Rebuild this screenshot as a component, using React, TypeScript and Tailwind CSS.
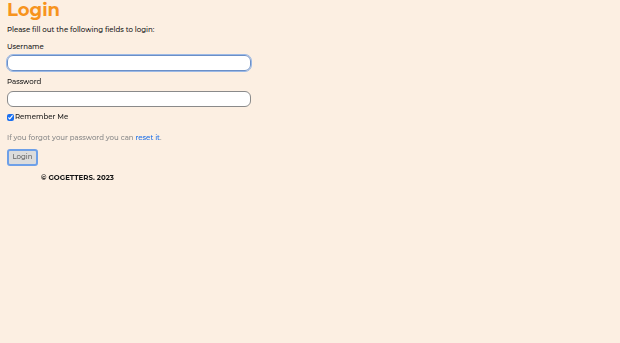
export default function App() {
  return (
    <div className="min-h-[343px] w-full bg-[#fcefe2] font-['Montserrat','Noto_Sans',sans-serif] text-[#161616]">
      <div className="px-[7px]">
        <h1 className="text-[18px] font-bold leading-[20px] text-[#f7941d]">Login</h1>
        <p className="mt-[5px] text-[7px] font-medium leading-[10px]">Please fill out the following fields to login:</p>
        <form className="w-[244px]" onSubmit={(e) => e.preventDefault()}>
          <label className="mt-[7px] block text-[7px] font-medium leading-[10px]">Username</label>
          <input
            autoFocus
            className="mt-[3px] block h-[16px] w-full rounded-[6px] border border-[#6b8fc7] bg-white px-[4px] text-[7px] outline outline-[1.5px] outline-[#9bb9e6]"
          />
          <label className="mt-[6px] block text-[7px] font-medium leading-[10px]">Password</label>
          <input
            type="password"
            className="mt-[4px] block h-[16px] w-full rounded-[6px] border border-[#8a8a8a] bg-white px-[4px] text-[7px] outline-none"
          />
          <label className="mt-[5px] flex items-center gap-[1px] text-[7px] font-medium leading-[10px]">
            <input type="checkbox" defaultChecked className="m-0 h-[7px] w-[7px] accent-[#1a6ff0]" />
            Remember Me
          </label>
          <p className="mt-[11px] text-[7px] font-medium leading-[10px] text-[#8a8a8a]">
            If you forgot your password you can <a href="#" className="text-[#1b6ee8]">reset it</a>.
          </p>
          <button
            type="submit"
            className="mt-[6px] block h-[17px] w-[31px] rounded-[3px] border-2 border-[#6ea0e8] bg-[#dcdcdc] text-[7px] font-medium text-[#666]"
          >
            Login
          </button>
        </form>
        <p className="mt-[7px] pl-[34px] text-[7px] font-bold leading-[10px]">© GOGETTERS. 2023</p>
      </div>
    </div>
  );
}
